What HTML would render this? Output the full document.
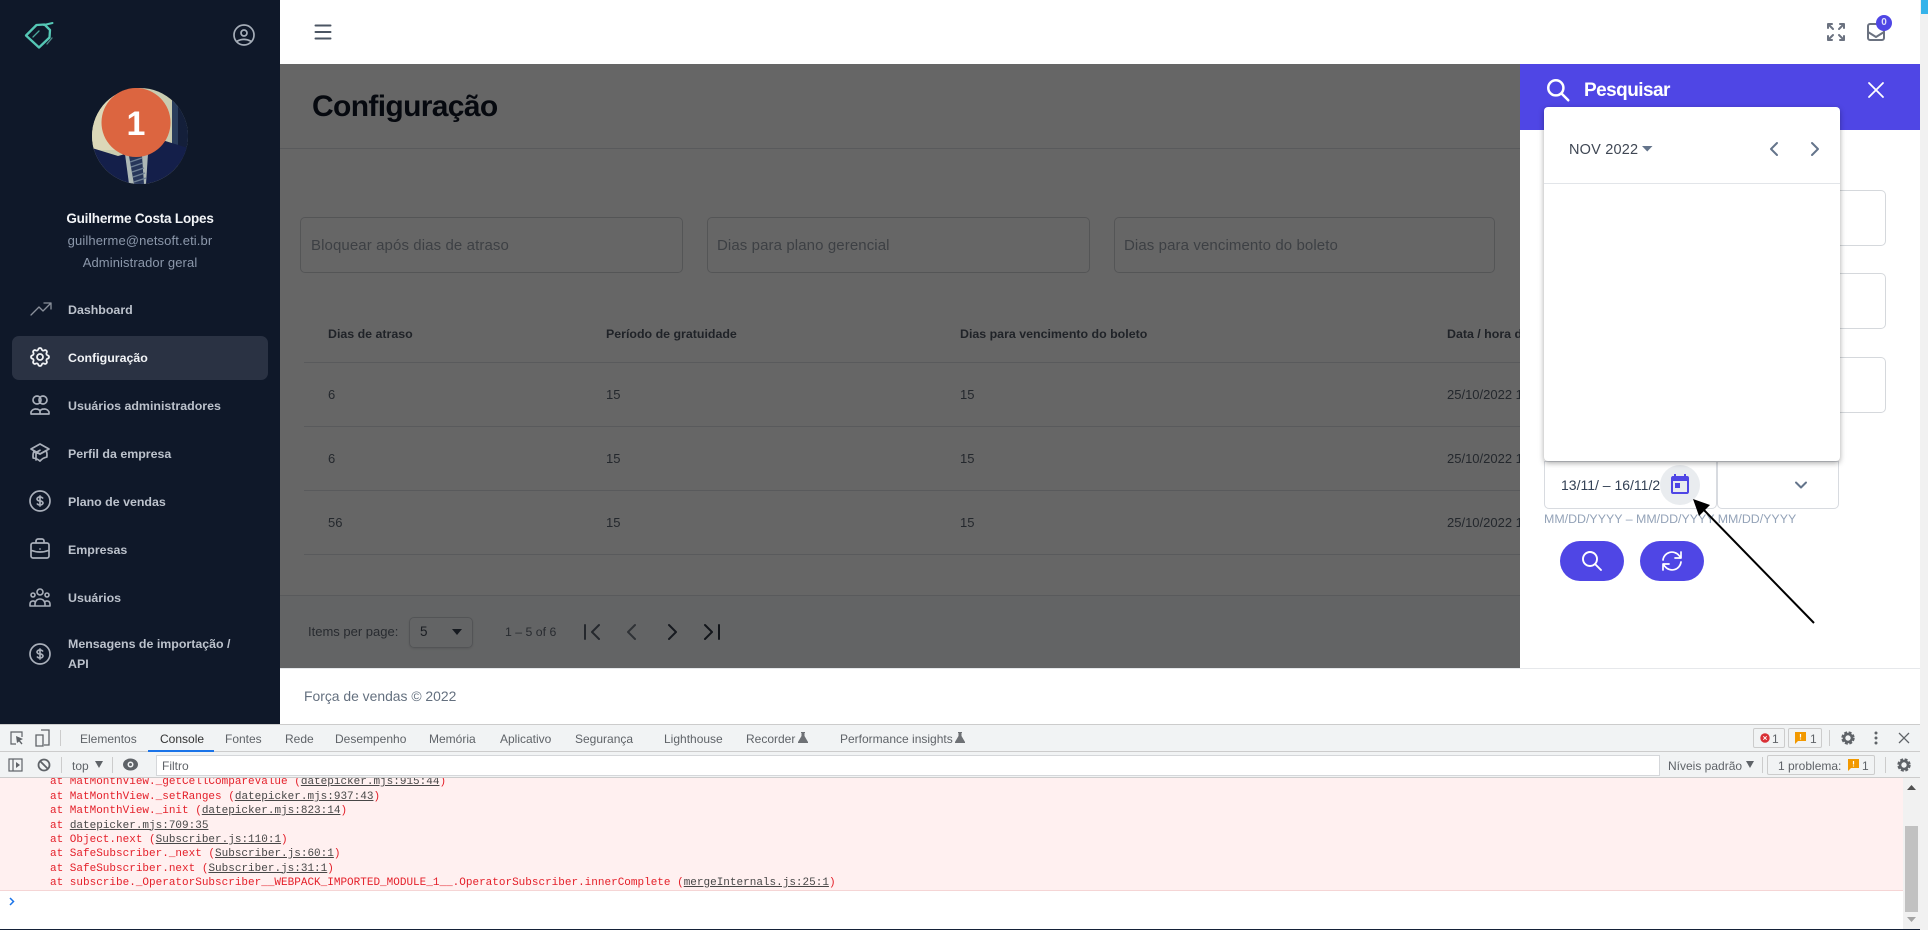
<!DOCTYPE html>
<html lang="pt-BR"><head><meta charset="utf-8"><title>Configuração</title>
<style>
*{box-sizing:border-box}
html,body{margin:0;padding:0;width:1928px;height:930px;overflow:hidden;background:#fff;font-family:"Liberation Sans",sans-serif}
.a{position:absolute}
.t{position:absolute;white-space:nowrap;line-height:20px;height:20px}
svg{position:absolute;overflow:visible}
.ic{fill:none;stroke-linecap:round;stroke-linejoin:round}
#side{left:0;top:0;width:280px;height:724px;background:#0f1829}
.m{left:68px;font-size:12.4px;font-weight:700;color:#bcc2cc;letter-spacing:0}
.inp{border:1px solid #d3d5d8;border-radius:5px;height:56px;top:217px}
.ph{font-size:15px;color:#9aa1ab;top:236px;letter-spacing:.1px}
.th{font-size:12.4px;font-weight:700;color:#505865;top:324px}
.td{font-size:13px;color:#5b6470}
.ln{height:1px;background:#dfe2e6}
.tab{top:729px;font-size:12px;color:#5f6368}
.con{left:50px;font:11px/14px "Liberation Mono",monospace;color:#e4202a;white-space:pre;position:absolute;height:14px}
.con u{color:#474747}
</style></head><body>

<!-- page scrollbar strip -->
<div class="a" style="left:1920px;top:0;width:8px;height:930px;background:#f1f1f1"></div>
<div class="a" style="left:1921px;top:0;width:7px;height:14px;background:#35b3ea"></div>

<!-- main content -->
<div class="a" style="left:280px;top:64px;width:1240px;height:604px;background:#fff;overflow:hidden">
</div>
<div class="t" style="left:312px;top:92px;height:30px;line-height:30px;font-size:30px;font-weight:700;color:#111827;letter-spacing:-.65px">Configuração</div>
<div class="a ln" style="left:280px;top:148px;width:1240px"></div>

<div class="a inp" style="left:300px;width:383px"></div>
<div class="a inp" style="left:707px;width:383px"></div>
<div class="a inp" style="left:1114px;width:381px"></div>
<div class="t ph" style="left:311px">Bloquear após dias de atraso</div>
<div class="t ph" style="left:717px">Dias para plano gerencial</div>
<div class="t ph" style="left:1124px">Dias para vencimento do boleto</div>

<div class="t th" style="left:328px">Dias de atraso</div>
<div class="t th" style="left:606px">Período de gratuidade</div>
<div class="t th" style="left:960px">Dias para vencimento do boleto</div>
<div class="t th" style="left:1447px">Data / hora de criação</div>
<div class="a ln" style="left:304px;top:362px;width:1216px"></div>

<div class="t td" style="left:328px;top:385px">6</div><div class="t td" style="left:606px;top:385px">15</div><div class="t td" style="left:960px;top:385px">15</div><div class="t td" style="left:1447px;top:385px">25/10/2022 10:00</div>
<div class="a ln" style="left:304px;top:426px;width:1216px"></div>
<div class="t td" style="left:328px;top:449px">6</div><div class="t td" style="left:606px;top:449px">15</div><div class="t td" style="left:960px;top:449px">15</div><div class="t td" style="left:1447px;top:449px">25/10/2022 10:00</div>
<div class="a ln" style="left:304px;top:490px;width:1216px"></div>
<div class="t td" style="left:328px;top:513px">56</div><div class="t td" style="left:606px;top:513px">15</div><div class="t td" style="left:960px;top:513px">15</div><div class="t td" style="left:1447px;top:513px">25/10/2022 10:00</div>
<div class="a ln" style="left:304px;top:554px;width:1216px"></div>

<div class="a" style="left:280px;top:595px;width:1240px;height:73px;background:#f8fafc;border-top:1px solid #dfe2e6"></div>
<div class="t" style="left:308px;top:622px;font-size:13px;color:#646c78">Items per page:</div>
<div class="a" style="left:409px;top:617px;width:64px;height:31px;border:1px solid #cfd3d8;border-radius:5px;box-shadow:0 1px 2px rgba(0,0,0,.1)"></div>
<div class="t" style="left:420px;top:622px;font-size:13.5px;color:#444c58">5</div>
<svg style="left:452px;top:629px" width="10" height="6"><path d="M0 0h10L5 6z" fill="#374151"/></svg>
<div class="t" style="left:505px;top:622px;font-size:12.3px;color:#646c78">1 – 5 of 6</div>
<svg style="left:580px;top:620px" width="24" height="24" class="ic" stroke="#5d6572" stroke-width="2"><path d="M5 5v14M19 5l-7 7 7 7"/></svg>
<svg style="left:620px;top:620px" width="24" height="24" class="ic" stroke="#767d88" stroke-width="2"><path d="M15 5l-7 7 7 7"/></svg>
<svg style="left:660px;top:620px" width="24" height="24" class="ic" stroke="#3b4350" stroke-width="2"><path d="M9 5l7 7-7 7"/></svg>
<svg style="left:700px;top:620px" width="24" height="24" class="ic" stroke="#2d3542" stroke-width="2"><path d="M5 5l7 7-7 7M19 5v14"/></svg>

<!-- dim overlay -->
<div class="a" style="left:280px;top:64px;width:1240px;height:604px;background:rgba(0,0,0,.6)"></div>

<!-- top bar -->
<div class="a" style="left:280px;top:0;width:1640px;height:64px;background:#fff"></div>
<svg style="left:311px;top:20px" width="24" height="24" viewBox="0 0 24 24" class="ic" stroke="#4b5563" stroke-width="2"><path d="M4.500 5.500h15M4.500 12h15M4.500 18.500h15"/></svg>
<svg style="left:1824px;top:20px" width="24" height="24" viewBox="0 0 24 24" class="ic" stroke="#6b7280" stroke-width="2"><path d="M4 8V4m0 0h4M4 4l5 5m11-1V4m0 0h-4m4 0l-5 5M4 16v4m0 0h4m-4 0l5-5m11 5l-5-5m5 5v-4m0 4h-4"/></svg>
<svg style="left:1864px;top:20px" width="24" height="24" viewBox="0 0 24 24" class="ic" stroke="#6b7280" stroke-width="2"><path d="M6 4h12a2 2 0 012 2v12a2 2 0 01-2 2H6a2 2 0 01-2-2V6a2 2 0 012-2zM4 12l8 5 8-5"/></svg>
<div class="a" style="left:1876px;top:15px;width:16px;height:16px;border-radius:50%;background:#4f46e5;color:#e0e0f8;font-size:10px;font-weight:700;line-height:16px;text-align:center">0</div>

<!-- footer -->
<div class="a" style="left:280px;top:668px;width:1640px;height:56px;background:#fff;border-top:1px solid #e6e8eb"></div>
<div class="t" style="left:304px;top:686px;font-size:13.900px;color:#64707f">Força de vendas © 2022</div>

<!-- sidebar -->
<div class="a" id="side"></div>
<svg style="left:0;top:0" width="70" height="60" class="ic" stroke="#55c7b5" stroke-width="2.300"><path d="M26 35.500L36.500 25l8-.5 5.500 5.500-.5 7.500L39 47.500z"/><path d="M44 25l8.500-2" stroke-width="2"/><path d="M33 37l6-6" stroke-width="1.300" stroke="#4aa89b"/><path d="M47 44l5-6" stroke-width="1.300" stroke="#4d8a88"/></svg>
<svg style="left:232px;top:23px" width="24" height="24" viewBox="0 0 24 24" class="ic" stroke="#a5adb8" stroke-width="1.700"><path d="M5.100 18.200A13.900 13.900 0 0112 16.400c2.500 0 4.800.7 6.900 1.800M15 10a3 3 0 11-6 0 3 3 0 016 0zm7 2a10 10 0 11-20 0 10 10 0 0120 0z"/></svg>

<svg style="left:92px;top:88px" width="96" height="96" viewBox="0 0 96 96">
<defs><clipPath id="c"><circle cx="48" cy="48" r="48"/></clipPath></defs>
<g clip-path="url(#c)">
<rect width="96" height="96" fill="#c9ccb0"/>
<rect x="0" y="0" width="30" height="62" fill="#dcd8b8"/>
<rect x="80" y="0" width="16" height="70" fill="#2a3d5c"/>
<rect x="86" y="0" width="10" height="96" fill="#141f3a"/>
<path d="M0 60L26 68 48 62 70 52 96 60V96H0z" fill="#141f4a"/>
<path d="M33 66L48 64 56 66 54 96H37z" fill="#aeb8b6"/>
<path d="M37 68H50L52 96H42z" fill="#27365a"/>
<path d="M38 74L50 70M39 79L51 75M40 84L52 80M41 89L53 85M42 94L54 90" stroke="#6f8096" stroke-width="1.300"/>
</g>
<circle cx="44" cy="34.500" r="34.500" fill="#dc6540"/>
<text x="44" y="47" text-anchor="middle" font-family="Liberation Sans,sans-serif" font-weight="700" font-size="34" fill="#fff">1</text>
</svg>

<div class="t" style="left:0;width:280px;text-align:center;top:209px;font-size:13.500px;font-weight:700;color:#f2f4f7;letter-spacing:-.2px">Guilherme Costa Lopes</div>
<div class="t" style="left:0;width:280px;text-align:center;top:230.500px;font-size:13px;color:#8c98ab;letter-spacing:.12px">guilherme@netsoft.eti.br</div>
<div class="t" style="left:0;width:280px;text-align:center;top:252.500px;font-size:13px;color:#8c98ab;letter-spacing:.1px">Administrador geral</div>

<div class="a" style="left:12px;top:336px;width:256px;height:44px;border-radius:7px;background:#2a3243"></div>

<svg style="left:29px;top:297px" width="24" height="24" viewBox="0 0 24 24" class="ic" stroke="#8a909b" stroke-width="1.300"><path d="M15 6h7m0 0v6m0-6l-8 8-4-4-8 8"/></svg>
<div class="t m" style="top:300px">Dashboard</div>

<svg style="left:28px;top:345px" width="24" height="24" viewBox="0 0 24 24" class="ic" stroke="#f0f2f5" stroke-width="1.800"><path d="M10.325 4.317c.426-1.756 2.924-1.756 3.350 0a1.724 1.724 0 002.573 1.066c1.543-.94 3.310.826 2.370 2.370a1.724 1.724 0 001.065 2.572c1.756.426 1.756 2.924 0 3.350a1.724 1.724 0 00-1.066 2.573c.94 1.543-.826 3.310-2.370 2.370a1.724 1.724 0 00-2.572 1.065c-.426 1.756-2.924 1.756-3.350 0a1.724 1.724 0 00-2.573-1.066c-1.543.94-3.310-.826-2.370-2.370a1.724 1.724 0 00-1.065-2.572c-1.756-.426-1.756-2.924 0-3.350a1.724 1.724 0 001.066-2.573c-.94-1.543.826-3.310 2.370-2.370.996.608 2.296.07 2.572-1.065z"/><path d="M15 12a3 3 0 11-6 0 3 3 0 016 0z"/></svg>
<div class="t m" style="top:348px;color:#f2f4f7">Configuração</div>

<svg style="left:28px;top:393px" width="24" height="24" viewBox="0 0 24 24" class="ic" stroke="#a9afba" stroke-width="1.700"><path d="M13 7a4 4 0 11-8 0 4 4 0 018 0zM19 7a4 4 0 11-8 0 4 4 0 018 0zM3 21v-2a5 5 0 015-3c2 0 3.200.6 4 2 .8-1.400 2-2 4-2a5 5 0 015 3v2zM12 18v3"/></svg>
<div class="t m" style="top:396px">Usuários administradores</div>

<svg style="left:28px;top:441px" width="24" height="24" viewBox="0 0 24 24" class="ic" stroke="#a9afba" stroke-width="1.700"><path d="M12 13l9-5-9-5-9 5 9 5z"/><path d="M12 13l6.160-3.422a12.083 12.083 0 01.665 6.479A11.952 11.952 0 0012 20.055a11.952 11.952 0 00-6.824-2.998 12.083 12.083 0 01.665-6.479L12 13zm-4 6v-7.500l4-2.222"/></svg>
<div class="t m" style="top:444px">Perfil da empresa</div>

<svg style="left:28px;top:489px" width="24" height="24" viewBox="0 0 24 24" class="ic" stroke="#a9afba" stroke-width="1.700"><path d="M12 8c-1.657 0-3 .895-3 2s1.343 2 3 2 3 .895 3 2-1.343 2-3 2m0-8c1.110 0 2.080.402 2.599 1M12 8V7m0 1v8m0 0v1m0-1c-1.110 0-2.080-.402-2.599-1M22 12a10 10 0 11-20 0 10 10 0 0120 0z"/></svg>
<div class="t m" style="top:492px">Plano de vendas</div>

<svg style="left:28px;top:537px" width="24" height="24" viewBox="0 0 24 24" class="ic" stroke="#a9afba" stroke-width="1.700"><path d="M21 13.255A23.931 23.931 0 0112 15c-3.183 0-6.220-.620-9-1.745M16 6V4a2 2 0 00-2-2h-4a2 2 0 00-2 2v2m4 6h.010M5 21h14a2 2 0 002-2V8a2 2 0 00-2-2H5a2 2 0 00-2 2v11a2 2 0 002 2z"/></svg>
<div class="t m" style="top:540px">Empresas</div>

<svg style="left:28px;top:585px" width="24" height="24" viewBox="0 0 24 24" class="ic" stroke="#a9afba" stroke-width="1.600"><path d="M17 21h5v-2a3 3 0 00-5.356-1.857M17 21H7m10 0v-2c0-.656-.126-1.283-.356-1.857M7 21H2v-2a3 3 0 015.356-1.857M7 21v-2c0-.656.126-1.283.356-1.857m0 0a5.002 5.002 0 019.288 0M15 7a3 3 0 11-6 0 3 3 0 016 0zm6 3a2 2 0 11-4 0 2 2 0 014 0zM7 10a2 2 0 11-4 0 2 2 0 014 0z"/></svg>
<div class="t m" style="top:588px">Usuários</div>

<svg style="left:28px;top:642px" width="24" height="24" viewBox="0 0 24 24" class="ic" stroke="#a9afba" stroke-width="1.700"><path d="M12 8c-1.657 0-3 .895-3 2s1.343 2 3 2 3 .895 3 2-1.343 2-3 2m0-8c1.110 0 2.080.402 2.599 1M12 8V7m0 1v8m0 0v1m0-1c-1.110 0-2.080-.402-2.599-1M22 12a10 10 0 11-20 0 10 10 0 0120 0z"/></svg>
<div class="t m" style="top:634px">Mensagens de importação /</div>
<div class="t m" style="top:654px">API</div>

<!-- search panel -->
<div class="a" style="left:1520px;top:64px;width:400px;height:604px;background:#fff"></div>
<div class="a" style="left:1520px;top:64px;width:400px;height:66px;background:#4f46e5"></div>
<svg style="left:1545px;top:77px" width="26" height="26" viewBox="0 0 24 24" class="ic" stroke="#fff" stroke-width="2.300"><path d="M21.500 21.500l-6.500-6.500m2-5a7 7 0 11-14 0 7 7 0 0114 0z"/></svg>
<div class="t" style="left:1584px;top:80px;height:22px;line-height:22px;font-size:19px;font-weight:700;color:#fff;letter-spacing:-.55px">Pesquisar</div>
<svg style="left:1864px;top:78px" width="24" height="24" viewBox="0 0 24 24" class="ic" stroke="#fff" stroke-width="1.800"><path d="M5 19L19 5M5 5l14 14"/></svg>

<div class="a" style="left:1840px;top:190px;width:46px;height:56px;border:1px solid #d5d8dc;border-left:0;border-radius:0 5px 5px 0"></div>
<div class="a" style="left:1840px;top:273px;width:46px;height:56px;border:1px solid #d5d8dc;border-left:0;border-radius:0 5px 5px 0"></div>
<div class="a" style="left:1840px;top:357px;width:46px;height:56px;border:1px solid #d5d8dc;border-left:0;border-radius:0 5px 5px 0"></div>

<div class="a" style="left:1544px;top:461px;width:173px;height:48px;border:1px solid #d8dbe0;border-radius:0 0 5px 5px"></div>
<div class="a" style="left:1717px;top:461px;width:122px;height:48px;border:1px solid #d8dbe0;border-radius:0 0 5px 5px"></div>
<div class="t" style="left:1561px;top:475px;font-size:14px;color:#334155">13/11/ – 16/11/2</div>
<div class="a" style="left:1660px;top:465px;width:40px;height:40px;border-radius:50%;background:#e9ecef"></div>
<svg style="left:1668px;top:473px" width="24" height="24" viewBox="0 0 24 24" fill="#4f46e5"><path d="M19 3h-1V1h-2v2H8V1H6v2H5c-1.110 0-2 .9-2 2v14a2 2 0 002 2h14c1.100 0 2-.9 2-2V5a2 2 0 00-2-2zm0 16H5V8h14v11zM7 10h5v5H7z"/></svg>
<svg style="left:1795px;top:479px" width="12" height="12" viewBox="0 0 12 12" class="ic" stroke="#64748b" stroke-width="2"><path d="M1 3.500l5 5 5-5"/></svg>
<div class="t" style="left:1544px;top:508.500px;font-size:12.400px;color:#94a3b8">MM/DD/YYYY – MM/DD/YYYY MM/DD/YYYY</div>

<div class="a" style="left:1560px;top:541px;width:64px;height:40px;border-radius:20px;background:#4f46e5"></div>
<svg style="left:1580px;top:549px" width="24" height="24" viewBox="0 0 24 24" class="ic" stroke="#fff" stroke-width="1.900"><path d="M21 21l-6-6m2-5a7 7 0 11-14 0 7 7 0 0114 0z"/></svg>
<div class="a" style="left:1640px;top:541px;width:64px;height:40px;border-radius:20px;background:#4f46e5"></div>
<svg style="left:1660px;top:549px" width="24" height="24" viewBox="0 0 24 24" class="ic" stroke="#fff" stroke-width="1.700"><path d="M3 11a9 9 0 0116-4.500L21 9m0-6v6h-6M21 13a9 9 0 01-16 4.500L3 15m0 6v-6h6"/></svg>

<!-- date popup -->
<div class="a" style="left:1544px;top:107px;width:296px;height:354px;background:#fff;border-radius:4px;box-shadow:0 2px 6px rgba(0,0,0,.35)"></div>
<div class="t" style="left:1569px;top:140px;font-size:14.500px;color:#3f4754;letter-spacing:.2px">NOV 2022</div>
<svg style="left:1642px;top:146px" width="11" height="6"><path d="M0 0h10.500L5.250 5.500z" fill="#64748b"/></svg>
<svg style="left:1765px;top:140px" width="18" height="18" viewBox="0 0 18 18" class="ic" stroke="#64748b" stroke-width="2"><path d="M12 3L6 9l6 6"/></svg>
<svg style="left:1806px;top:140px" width="18" height="18" viewBox="0 0 18 18" class="ic" stroke="#64748b" stroke-width="2"><path d="M6 3l6 6-6 6"/></svg>
<div class="a" style="left:1544px;top:183px;width:296px;height:1px;background:#e2e5e9"></div>

<!-- arrow -->
<svg style="left:0;top:0" width="1928" height="930"><path d="M1814 623L1702 508" stroke="#000" stroke-width="2" fill="none"/><path d="M1693 499L1710 505 1699 516z" fill="#000"/></svg>

<!-- devtools -->
<div class="a" style="left:0;top:724px;width:1920px;height:28px;background:#f1f3f4;border-top:1px solid #ccc;border-bottom:1px solid #ccc"></div>
<div class="a" style="left:0;top:752px;width:1920px;height:26px;background:#f1f3f4;border-bottom:1px solid #ccc"></div>

<svg style="left:9px;top:730px" width="16" height="16" viewBox="0 0 16 16" fill="none" stroke="#5f6368" stroke-width="1.200"><path d="M7 14H2V2h11v5"/><path d="M7 6l7 3-3 1.500 2.500 3-1 1-2.500-3L8 13z" fill="#5f6368" stroke="none"/></svg>
<svg style="left:35px;top:729px" width="16" height="18" viewBox="0 0 16 18" fill="none" stroke="#5f6368" stroke-width="1.300"><path d="M6 1h8v15H9M1 6h7v11H1z"/></svg>
<div class="a" style="left:60px;top:730px;width:1px;height:16px;background:#ccc"></div>
<div class="t tab" style="left:80px">Elementos</div>
<div class="t tab" style="left:160px;color:#333">Console</div>
<div class="a" style="left:148px;top:750px;width:66px;height:2px;background:#1a73e8"></div>
<div class="t tab" style="left:225px">Fontes</div>
<div class="t tab" style="left:285px">Rede</div>
<div class="t tab" style="left:335px">Desempenho</div>
<div class="t tab" style="left:429px">Memória</div>
<div class="t tab" style="left:500px">Aplicativo</div>
<div class="t tab" style="left:575px">Segurança</div>
<div class="t tab" style="left:664px">Lighthouse</div>
<div class="t tab" style="left:746px">Recorder</div>
<svg style="left:798px;top:732px" width="10" height="11"><path d="M3 0h4v1H6.500v3L10 10v1H0v-1l3.500-6V1H3z" fill="#6e7175"/></svg>
<div class="t tab" style="left:840px">Performance insights</div>
<svg style="left:955px;top:732px" width="10" height="11"><path d="M3 0h4v1H6.500v3L10 10v1H0v-1l3.500-6V1H3z" fill="#6e7175"/></svg>

<svg style="left:8px;top:758px" width="16" height="14" fill="none" stroke="#5f6368" stroke-width="1.200"><rect x="1" y="1" width="13" height="12"/><path d="M5 1v12"/><path d="M8 4l4 3-4 3z" fill="#5f6368" stroke="none"/></svg>
<svg style="left:37px;top:758px" width="14" height="14" fill="none" stroke="#5f6368" stroke-width="1.800"><circle cx="7" cy="7" r="5.500"/><path d="M3 3l8 8"/></svg>
<div class="a" style="left:61px;top:757px;width:1px;height:16px;background:#ccc"></div>
<div class="t" style="left:72px;top:756px;font-size:12px;color:#5f6368">top</div>
<svg style="left:95px;top:761px" width="8" height="7"><path d="M0 0h8L4 7z" fill="#5f6368"/></svg>
<div class="a" style="left:112px;top:757px;width:1px;height:16px;background:#ccc"></div>
<svg style="left:123px;top:758px" width="15" height="13"><ellipse cx="7.500" cy="6.500" rx="7.500" ry="6" fill="#5f6368"/><circle cx="7.500" cy="6.500" r="3" fill="#f1f3f4"/><circle cx="7.500" cy="6.500" r="1.500" fill="#5f6368"/></svg>
<div class="a" style="left:156px;top:755px;width:1504px;height:21px;background:#fff;border:1px solid #d5d7da"></div>
<div class="t" style="left:162px;top:756px;font-size:12px;color:#5f6368">Filtro</div>

<div class="a" style="left:1753px;top:728px;width:32px;height:20px;border:1px solid #ccc;border-radius:2px"></div>
<svg style="left:1760px;top:733px" width="10" height="10"><circle cx="5" cy="5" r="4.700" fill="#d93036"/><path d="M3.300 3.300l3.400 3.400M6.700 3.300l-3.400 3.400" stroke="#fff" stroke-width="1"/></svg>
<div class="t" style="left:1772px;top:729px;font-size:12px;color:#5f6368">1</div>
<div class="a" style="left:1788px;top:728px;width:34px;height:20px;border:1px solid #ccc;border-radius:2px"></div>
<svg style="left:1795px;top:732px" width="11" height="12"><path d="M0 0h11v9H3l-3 3z" fill="#f29900"/><path d="M5.500 2v3.500M5.500 6.500v1" stroke="#fff" stroke-width="1.200"/></svg>
<div class="t" style="left:1810px;top:729px;font-size:12px;color:#5f6368">1</div>
<div class="a" style="left:1829px;top:730px;width:1px;height:16px;background:#ccc"></div>
<svg style="left:1840px;top:730px" width="16" height="16" viewBox="0 0 16 16" fill="none" stroke="#5f6368" stroke-width="3.400" stroke-dasharray="2.600 1.400"><circle cx="8" cy="8" r="5"/></svg>
<svg style="left:1840px;top:730px" width="16" height="16" viewBox="0 0 16 16" fill="none" stroke="#5f6368" stroke-width="2.600"><circle cx="8" cy="8" r="4"/></svg>
<svg style="left:1874px;top:731px" width="4" height="14" fill="#5f6368"><circle cx="2" cy="2" r="1.500"/><circle cx="2" cy="7" r="1.500"/><circle cx="2" cy="12" r="1.500"/></svg>
<svg style="left:1899px;top:733px" width="10" height="10" stroke="#5f6368" stroke-width="1.300"><path d="M0 0l10 10M10 0L0 10"/></svg>

<div class="t" style="left:1668px;top:756px;font-size:12px;color:#5f6368">Níveis padrão</div>
<svg style="left:1746px;top:761px" width="8" height="7"><path d="M0 0h8L4 7z" fill="#5f6368"/></svg>
<div class="a" style="left:1762px;top:757px;width:1px;height:16px;background:#ccc"></div>
<div class="a" style="left:1767px;top:755px;width:108px;height:20px;border:1px solid #ccc;border-radius:2px"></div>
<div class="t" style="left:1778px;top:756px;font-size:12px;color:#5f6368">1 problema:</div>
<svg style="left:1848px;top:759px" width="11" height="12"><path d="M0 0h11v9H3l-3 3z" fill="#f29900"/><path d="M5.500 2v3.500M5.500 6.500v1" stroke="#fff" stroke-width="1.200"/></svg>
<div class="t" style="left:1862px;top:756px;font-size:12px;color:#5f6368">1</div>
<div class="a" style="left:1885px;top:757px;width:1px;height:16px;background:#ccc"></div>
<svg style="left:1896px;top:757px" width="16" height="16" viewBox="0 0 16 16" fill="none" stroke="#5f6368" stroke-width="3.400" stroke-dasharray="2.600 1.400"><circle cx="8" cy="8" r="5"/></svg>
<svg style="left:1896px;top:757px" width="16" height="16" viewBox="0 0 16 16" fill="none" stroke="#5f6368" stroke-width="2.600"><circle cx="8" cy="8" r="4"/></svg>

<div class="a" style="left:0;top:778px;width:1903px;height:113px;background:#fff0f0;border-bottom:1px solid #f5d5d5;overflow:hidden">
<div class="con" style="top:-3px">at MatMonthView._getCellCompareValue (<u>datepicker.mjs:915:44</u>)</div>
<div class="con" style="top:12px">at MatMonthView._setRanges (<u>datepicker.mjs:937:43</u>)</div>
<div class="con" style="top:26.300px">at MatMonthView._init (<u>datepicker.mjs:823:14</u>)</div>
<div class="con" style="top:40.500px">at <u>datepicker.mjs:709:35</u></div>
<div class="con" style="top:54.800px">at Object.next (<u>Subscriber.js:110:1</u>)</div>
<div class="con" style="top:69.100px">at SafeSubscriber._next (<u>Subscriber.js:60:1</u>)</div>
<div class="con" style="top:83.500px">at SafeSubscriber.next (<u>Subscriber.js:31:1</u>)</div>
<div class="con" style="top:97.800px">at subscribe._OperatorSubscriber__WEBPACK_IMPORTED_MODULE_1__.OperatorSubscriber.innerComplete (<u>mergeInternals.js:25:1</u>)</div>
</div>
<div class="a" style="left:0;top:891px;width:1903px;height:38px;background:#fff"></div>
<svg style="left:9px;top:897px" width="6" height="9" fill="none" stroke="#1a73e8" stroke-width="1.500"><path d="M1 1l3.500 3.500L1 8"/></svg>
<div class="a" style="left:1903px;top:778px;width:17px;height:151px;background:#f1f1f1"></div>
<div class="a" style="left:1905px;top:826px;width:13px;height:86px;background:#c1c1c1"></div>
<svg style="left:1907px;top:785px" width="9" height="5"><path d="M0 5h9L4.500 0z" fill="#505050"/></svg>
<svg style="left:1907px;top:917px" width="9" height="5"><path d="M0 0h9L4.500 5z" fill="#a3a3a3"/></svg>
<div class="a" style="left:0;top:929px;width:1920px;height:1px;background:#142138"></div>

</body></html>
